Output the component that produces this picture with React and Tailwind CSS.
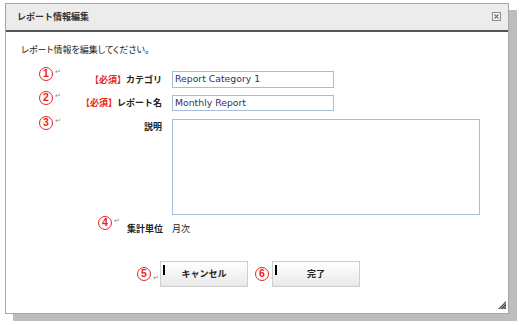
const JP = "font-['Noto_Sans_CJK_JP',sans-serif]"

function Num({ n, low, gap = 'mr-[0px]' }) {
  return (
    <span className="flex items-center">
      <span className="w-[14px] h-[14px] rounded-full border-[1.5px] border-[#e8231c] text-[#e8231c] text-[10.5px] font-bold leading-none flex items-center justify-center font-['Liberation_Sans',sans-serif]">
        {n}
      </span>
      <span className={`text-[7px] leading-none text-[#8a8a8a] ml-[2px] ${low ? `mt-[8px] w-[3px] ${gap}` : '-mt-[4px]'}`}>↵</span>
    </span>
  )
}

function Req() {
  return <span className="text-[#e8231c]">【必須】</span>
}

function Button({ label }) {
  return (
    <button className="relative w-[88px] h-[26px] border border-[#cdcdcd] bg-gradient-to-b from-white to-[#e9e9e9] text-[9px] font-bold text-[#222]">
      <span className="absolute left-[2px] top-[3px] w-[2px] h-[10px] bg-black" />
      {label}
    </button>
  )
}

export default function App() {
  return (
    <div className={`w-[519px] h-[325px] bg-white pt-[3px] pl-[5px] ${JP}`}>
      <div className="relative w-[504px] h-[311px] border border-[#a6a6a6] bg-white shadow-[8px_7px_0_#bdbdbd] flex flex-col">
        {/* Title bar */}
        <div className="h-[28px] shrink-0 bg-[#ececec] border-b-2 border-[#555] flex items-center justify-between pl-[11px] pr-[7px]">
          <span className="text-[9px] font-bold text-[#333]">レポート情報編集</span>
          <svg width="9" height="9" viewBox="0 0 9 9" className="-mt-[2px]">
            <rect x="0.5" y="0.5" width="8" height="8" fill="#f4f4f4" stroke="#8c8c8c" />
            <path d="M2.5 2.5 L6.5 6.5 M6.5 2.5 L2.5 6.5" stroke="#777" strokeWidth="1.2" />
          </svg>
        </div>

        {/* Body */}
        <div className="pl-[15px] pt-[11px] text-[9px] text-[#222] [font-feature-settings:'palt']">
          レポート情報を編集してください。
        </div>

        <div className="mt-[14px] flex flex-col text-[9px] text-[#222]">
          <div className="flex items-start">
            <div className="w-[156px] flex items-start justify-between">
              <span className="ml-[33px] -mt-[4px]"><Num n="1" /></span>
              <span className="leading-[17px] font-bold"><Req />カテゴリ</span>
            </div>
            <div className="ml-[10px] w-[162px] h-[17px] border border-[#a7bcd6] pl-[2px] flex items-center text-[9.3px] text-[#3a2d5c] font-['DejaVu_Sans',sans-serif]">
              Report Category 1
            </div>
          </div>

          <div className="mt-[7px] flex items-start">
            <div className="w-[156px] flex items-start justify-between">
              <span className="ml-[33px] -mt-[4px]"><Num n="2" /></span>
              <span className="leading-[16px] font-bold"><Req />レポート名</span>
            </div>
            <div className="ml-[10px] w-[162px] h-[16px] border border-[#a7bcd6] pl-[2px] flex items-center text-[9.3px] text-[#3a2d5c] font-['DejaVu_Sans',sans-serif]">
              Monthly Report
            </div>
          </div>

          <div className="mt-[8px] flex items-start">
            <div className="w-[156px] flex items-start justify-between">
              <span className="ml-[33px] -mt-[3px]"><Num n="3" /></span>
              <span className="mt-[1px] font-bold">説明</span>
            </div>
            <div className="ml-[10px] w-[308px] h-[96px] border border-[#a7bcd6]" />
          </div>

          <div className="mt-[7px] flex items-start">
            <div className="w-[157px] flex items-start justify-between">
              <span className="ml-[92px] -mt-[6px]"><Num n="4" /></span>
              <span className="leading-[14px] font-bold">集計単位</span>
            </div>
            <span className="ml-[9px] leading-[14px]">月次</span>
          </div>

          <div className="mt-[25px] ml-[131px] flex items-center">
            <Num n="5" low gap="mr-[4px]" />
            <Button label="キャンセル" />
            <span className="ml-[7px]"><Num n="6" low gap="-mr-[2px]" /></span>
            <Button label="完了" />
          </div>
        </div>

        {/* Resize grip */}
        <svg width="8" height="8" viewBox="0 0 8 8" className="absolute right-[2px] bottom-[4px]">
          <path d="M8 0 L8 8 L0 8 Z" fill="#555" />
          <path d="M2 8 L8 2 M5 8 L8 5" stroke="#bbb" strokeWidth="0.8" />
        </svg>
      </div>
    </div>
  )
}
